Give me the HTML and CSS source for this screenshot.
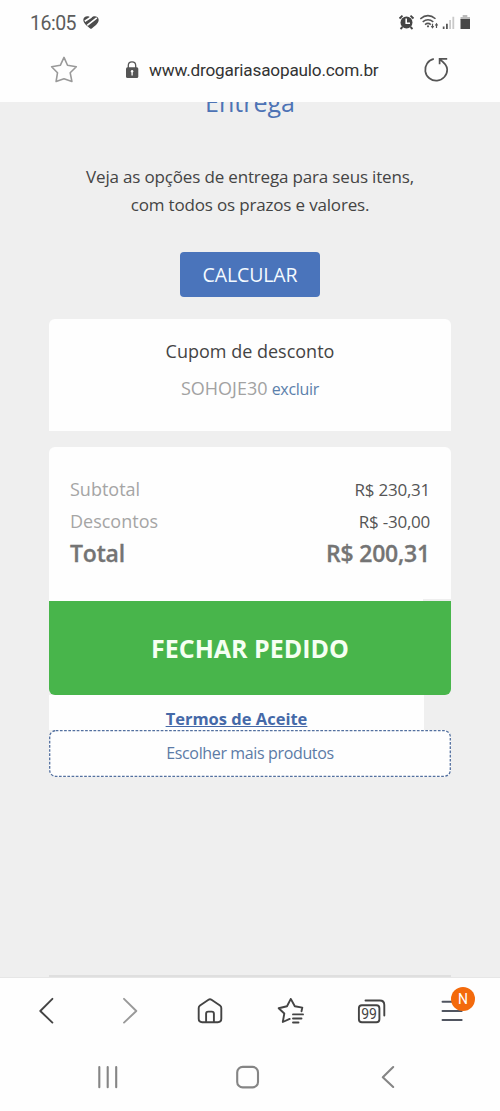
FILE: index.html
```html
<!DOCTYPE html>
<html lang="pt-BR">
<head>
<meta charset="utf-8">
<title>Drogaria São Paulo</title>
<link rel="stylesheet" href="styles.css">
</head>
<body>
<header class="browser-top">
  <div class="status">
    <span class="clock">16:05</span>
    <svg class="heart" width="18" height="16" viewBox="82 14 18 16">
      <path d="M91 29C87 26 83.500 23.500 83.300 20C83.200 16.200 88.500 14.600 91 18C93.500 14.600 98.900 16.200 98.700 20C98.500 23.500 95 26 91 29Z" fill="#4c4c4c"/>
      <path d="M84.800 21.200L91.300 17M87.200 25.300L96.800 17.800" stroke="#fff" stroke-width="1.700"/>
    </svg>
    <svg class="indicators" width="76" height="18" viewBox="396 13 76 18">
      <circle cx="406.500" cy="22.500" r="6" fill="#444"/>
      <path d="M399.500 18.500L402.500 15.600M410.500 15.600L413.500 18.500M402.500 27L400.500 29M410.500 27L412.500 29" stroke="#444" stroke-width="1.800"/>
      <path d="M406.200 18.500V23.300H410" fill="none" stroke="#fff" stroke-width="1.600"/>
      <g fill="none" stroke="#555" stroke-width="1.500">
        <path d="M420.300 18.800Q428 12.500 435.500 18.800M422.700 21.900Q428 17.500 433.300 21.900M425 24.600Q428 22.200 430.800 24.600"/>
        <path d="M432.500 23.800V28M436.500 28V23.800" stroke-width="1.200"/>
      </g>
      <circle cx="428" cy="26.300" r="1.100" fill="#555"/>
      <path d="M430.800 26H434.200L432.500 28.800ZM434.800 25.500H438.200L436.500 22.700Z" fill="#555"/>
      <path d="M442.800 26.500H444.500V29H442.800ZM446 23.700H447.800V29H446Z" fill="#555"/>
      <path d="M449.200 20H451V29H449.200ZM452.400 16.800H454.200V29H452.400Z" fill="#c9c9c9"/>
      <path d="M462.700 15H467.300V17H470V20H460.500V17H462.700Z" fill="#bbb"/>
      <path d="M460.500 19H470V29H460.500Z" fill="#484848"/>
    </svg>
  </div>
  <div class="address">
    <svg class="fav" width="28" height="28" viewBox="50 56 28 28">
      <path d="M64 57.400L67.500 65.300L76.300 66.700L70.200 72.800L71.900 81.400L64 78.700L56.100 81.400L57.500 72.800L51.600 66.800L60.300 65.300Z" fill="none" stroke="#999" stroke-width="1.600" stroke-linejoin="round"/>
    </svg>
    <svg class="lock" width="14" height="18" viewBox="125 61 14 18">
      <path d="M128.300 68V65.500Q128.300 61.900 132 61.900Q135.700 61.900 135.700 65.500V68" fill="none" stroke="#555" stroke-width="1.300"/>
      <rect x="126" y="67.300" width="12.300" height="10.600" rx="1.500" fill="#555"/>
      <path d="M132.100 71.500V75.500" stroke="#fff" stroke-width="1.300"/><circle cx="132.100" cy="71.200" r="1.200" fill="#fff"/>
    </svg>
    <span class="url">www.drogariasaopaulo.com.br</span>
    <svg class="reload" width="28" height="28" viewBox="422 56 28 28">
      <path d="M433.800 58.900A11 11 0 1 0 447.200 69.500Q447.200 64.500 439.600 59.200M439.600 64.200V58.900H447.200" fill="none" stroke="#555" stroke-width="1.700"/>
    </svg>
  </div>
</header>

<main class="page">
  <h1 class="title">Entrega</h1>
  <p class="intro">Veja as opções de entrega para seus itens,<br>com todos os prazos e valores.</p>
  <button class="calc">CALCULAR</button>
  <section class="coupon">
    <h2 class="coupon-title">Cupom de desconto</h2>
    <p class="coupon-row"><span class="code">SOHOJE30</span> <a class="remove">excluir</a></p>
  </section>
  <section class="summary">
    <div class="line"><span class="label">Subtotal</span><span class="value">R$ 230,31</span></div>
    <div class="line"><span class="label">Descontos</span><span class="value">R$ -30,00</span></div>
    <div class="line total"><span>Total</span><span class="total-value">R$ 200,31</span></div>
    <div class="edge"></div>
  </section>
  <button class="checkout">FECHAR PEDIDO</button>
  <div class="terms"><a class="terms-link">Termos de Aceite</a></div>
  <a class="more">
    <svg class="dashes" width="402" height="47"><rect x="0.700" y="0.700" width="400.600" height="45.600" rx="6"/></svg>
    <span class="more-text">Escolher mais produtos</span>
  </a>
  <hr class="rule">
</main>

<footer class="browser-bottom">
  <nav class="tools">
    <svg width="16" height="28" viewBox="38 997 16 28"><path d="M52.400 998.800L40.300 1011L52.400 1022.600" class="stroke dark"/></svg>
    <svg class="forward" width="16" height="28" viewBox="122 997 16 28"><path d="M124 998.800L136.300 1011L124 1022.600" class="stroke pale"/></svg>
    <svg class="home" width="28" height="28" viewBox="196 997 28 28"><path d="M198.700 1008Q198.700 1006.500 200 1005.500L208.500 999.800Q210 998.800 211.500 999.800L220 1005.500Q221.300 1006.500 221.300 1008V1018.800Q221.300 1022.200 217.800 1022.200H202.200Q198.700 1022.200 198.700 1018.800ZM206.100 1022V1013.700Q206.100 1011.600 208.200 1011.600H211.800Q213.900 1011.600 213.900 1013.700V1022" class="stroke dark"/></svg>
    <svg class="bookmarks" width="28" height="28" viewBox="277 997 28 28"><path d="M301.500 1011.200L302.300 1007.600L294.800 1006.300L290.800 998.900L287 1006.300L278.700 1008.200L284.300 1013.500L282.800 1022L289.700 1018.900M293 1014.400H303M293 1018.500H301.500M293 1022.500H298.500" class="stroke dark"/></svg>
    <span class="tabs">
      <svg width="30" height="28" viewBox="357 997 30 28"><path d="M365.500 1000.500H379.800Q384.300 1000.500 384.300 1005V1015.500" class="stroke dark"/><rect x="358.900" y="1005.200" width="20.500" height="17" rx="3" class="stroke dark"/></svg>
      <span class="tab-count">99</span>
    </span>
    <span class="menu">
      <svg width="24" height="28" viewBox="441 997 24 28"><path d="M442.500 1001.800H461.700M442.500 1011H461.700M442.500 1020H461.700" class="stroke slate"/></svg>
      <span class="badge">N</span>
    </span>
  </nav>
  <nav class="system">
    <svg width="22" height="24" viewBox="97 1065 22 24"><path d="M99.300 1067V1087.300M107.700 1067V1087.300M116.200 1067V1087.300" class="stroke sys"/></svg>
    <svg class="sys-home" width="26" height="24" viewBox="235 1065 26 24"><rect x="237.200" y="1066.900" width="20.800" height="20.500" rx="5.500" class="stroke sys"/></svg>
    <svg class="sys-back" width="16" height="24" viewBox="380 1065 16 24"><path d="M393.200 1067L382.800 1077.200L393.200 1087" class="stroke sys"/></svg>
  </nav>
</footer>
</body>
</html>
```

FILE: styles.css
```css
* { box-sizing: border-box; }
body { margin: 0; width: 500px; height: 1111px; overflow: hidden; background: #fefefe; font-family: "Open Sans", sans-serif; color: #444; display: flex; flex-direction: column; }
h1, h2, p { margin: 0; font-weight: 400; }
svg { display: block; flex: none; }
button { display: block; border: 0; padding: 0; font-family: inherit; }

.browser-top { height: 102px; flex: none; font-family: Roboto, sans-serif; }
.status { height: 46px; display: flex; align-items: center; padding: 0 28px 0 30px; }
.clock { width: 46px; margin-top: 2px; font-size: 19.500px; letter-spacing: -0.500px; color: #5c5c5c; line-height: 20px; }
.heart { margin-left: 6px; margin-top: -2px; }
.indicators { margin-left: auto; margin-top: -2px; }
.address { height: 48px; display: flex; align-items: center; padding: 0 50px; }
.lock { margin-left: 47px; }
.url { margin-left: 10px; font-size: 17.200px; letter-spacing: -0.190px; color: #333; white-space: nowrap; }
.reload { margin-left: auto; }

.page { height: 876px; flex: none; background: #efefef; overflow: hidden; display: flex; flex-direction: column; padding: 0 49px; border-bottom: 1px solid #e6e6e6; }
.title { margin-top: -18px; font-size: 25px; line-height: 36px; text-align: center; color: #4d73b5; flex: none; }
.intro { margin-top: 43px; font-size: 17px; letter-spacing: -0.170px; line-height: 28px; text-align: center; white-space: nowrap; }
.calc { margin: 33px auto 0; width: 140px; height: 45px; flex: none; background: #4a74bb; color: #f4faff; border-radius: 4px; font-size: 19.500px; letter-spacing: -0.100px; padding-bottom: 1px; }
.coupon { margin-top: 22px; height: 112px; flex: none; background: #fefefe; border-radius: 6px 6px 0 0; text-align: center; padding-top: 18px; }
.coupon-title { font-size: 18px; line-height: 28px; }
.coupon-row { margin-top: 9px; line-height: 28px; }
.code { font-size: 18px; color: #a2a2a2; }
.remove { font-size: 16px; letter-spacing: -0.300px; color: #5b80ab; }
.summary { position: relative; margin-top: 16px; height: 154px; flex: none; background: #fefefe; border-radius: 6px 6px 0 0; padding: 26px 21px 0; }
.line { height: 32px; display: flex; justify-content: space-between; align-items: center; }
.label { font-size: 18px; color: #a5a5a5; }
.value { font-size: 17px; letter-spacing: -0.250px; color: #555; }
.total { font-size: 23px; letter-spacing: -0.200px; font-weight: 600; color: #747474; -webkit-text-stroke: 0.300px #747474; }
.edge { position: absolute; right: 0; bottom: 0; width: 28px; height: 2px; background: #eee; }
.checkout { height: 94px; flex: none; background: #48b54b; color: #f5fff2; border-radius: 0 0 6px 6px; font-size: 25px; font-weight: 700; }
.terms { width: 375px; height: 35px; flex: none; background: #fefefe; text-align: center; padding-top: 10px; }
.terms-link { font-size: 16.500px; line-height: 28px; font-weight: 700; color: #4569a8; text-decoration: underline; }
.more { position: relative; height: 47px; flex: none; display: flex; align-items: center; justify-content: center; background: #fefefe; border-radius: 7px; padding-bottom: 1px; }
.more-text { font-size: 16px; letter-spacing: -0.360px; color: #5c7ba6; }
.dashes { position: absolute; left: 0; top: 0; }
.dashes rect { fill: none; stroke: #53709f; stroke-width: 1.300; stroke-dasharray: 2.700 1.500; }
.rule { width: 100%; margin: auto 0 0; border: 0; height: 2px; background: #dfdfdf; }

.browser-bottom { flex: 1; }
.tools { height: 66px; display: flex; align-items: center; padding-left: 38px; }
.forward { margin-left: 68px; }
.home { margin-left: 58px; }
.bookmarks { margin-left: 53px; }
.tabs { margin-left: 52px; }
.menu { margin-left: 54px; }
.system { height: 66px; display: flex; align-items: center; padding-left: 97px; }
.sys-home { margin-left: 116px; }
.sys-back { margin-left: 119px; }
.stroke { fill: none; stroke-width: 1.900; stroke-linecap: round; stroke-linejoin: round; }
.dark { stroke: #444; }
.pale { stroke: #999; }
.slate { stroke: #505560; }
.sys { stroke: #858585; stroke-width: 2.100; }
.tabs, .menu { position: relative; }
.tab-count { position: absolute; left: 2px; top: 9px; width: 20px; text-align: center; font: 14px/16px Roboto, sans-serif; color: #444; }
.badge { position: absolute; left: 10px; top: -10px; width: 24px; height: 24px; border-radius: 50%; background: #f36a0c; color: #fff; font: 14px/24px Roboto, sans-serif; text-align: center; }
```
